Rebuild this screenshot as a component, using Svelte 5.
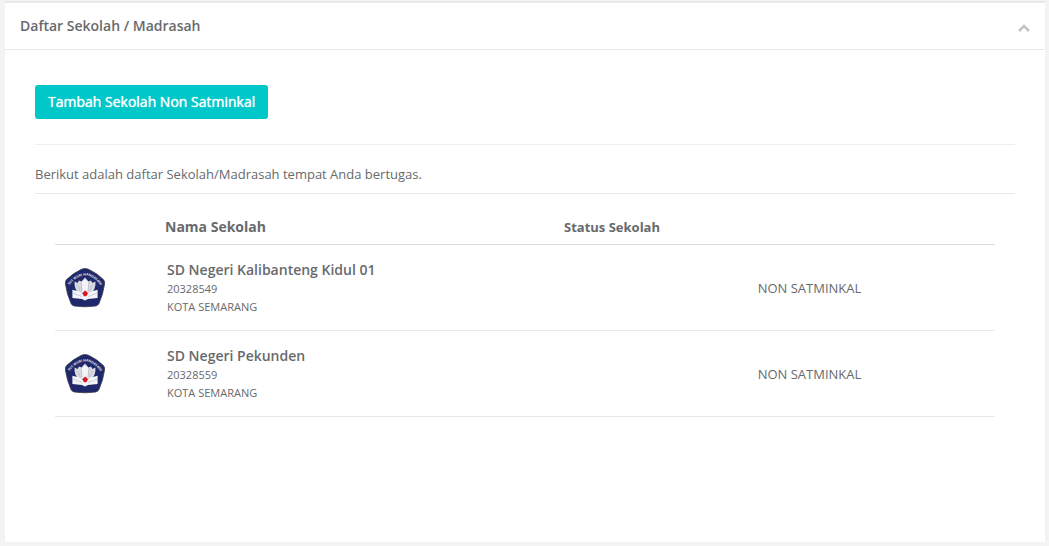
<script>
  let collapsed = $state(false);

  const schools = [
    { name: 'SD Negeri Kalibanteng Kidul 01', npsn: '20328549', city: 'KOTA SEMARANG', status: 'NON SATMINKAL' },
    { name: 'SD Negeri Pekunden', npsn: '20328559', city: 'KOTA SEMARANG', status: 'NON SATMINKAL' }
  ];
</script>

{#snippet logo(id)}
  <svg class="logo" viewBox="0 0 40 40" role="img" aria-label="Tut Wuri Handayani">
    <path
      d="M20 0.6 Q22 0.6 24 1.5 Q32 5.2 38.4 11.6 Q40 13.4 39.6 15.8 Q38.2 26 34 35.4 Q33 37.6 30.6 38 Q20 39.6 9.4 38 Q7 37.6 6 35.4 Q1.8 26 0.4 15.8 Q0 13.4 1.6 11.6 Q8 5.2 16 1.5 Q18 0.6 20 0.6Z"
      fill="#20286c"
      stroke="#38384c"
      stroke-width="0.8"
    />
    <path {id} d="M3 19.5 Q11 7.4 20 7.4 Q29 7.4 37 19.5" fill="none" />
    <text font-size="3.4" font-weight="700" fill="#e2e3e8" text-anchor="middle">
      <textPath href="#{id}" startOffset="50%">TUT WURI HANDAYANI</textPath>
    </text>
    <path d="M9.6 13.6 L12.5 15 L14 12.4 L16.5 13.4 L20 9.4 L23.5 13.4 L26 12.4 L27.5 15 L30.4 13.6 Q31 20 27 25 L13 25 Q9 20 9.6 13.6Z" fill="#d9dae1" />
    <path d="M16.8 14 Q20 10 23.2 14 L22.6 24 L17.4 24Z" fill="#f4f4f6" />
    <path d="M12.5 17 L15.5 23 M16 14.5 L17 23 M24 14.5 L23 23 M27.5 17 L24.5 23" stroke="#a6a9bc" stroke-width="0.5" />
    <path d="M7.4 21.8 L14 23.5 L20 27 L26 23.5 L32.6 21.8 L32.6 30 L23 31 L20 32.6 L17 31 L7.4 30Z" fill="#f4f4f6" />
    <path d="M8 25.2 L17 28.5 M32 25.2 L23 28.5" stroke="#b6b9c8" stroke-width="0.6" />
    <path d="M20.2 22.6 Q22.8 23.8 22.6 26 Q22 28.4 20.2 28.4 Q18.2 28.2 17.8 26 Q17.8 23.8 20.2 22.6Z" fill="#e01522" />
  </svg>
{/snippet}

<section class="panel">
  <header class="panel-heading">
    <h1>Daftar Sekolah / Madrasah</h1>
    <button class="toggle" type="button" aria-label="Tutup panel" aria-expanded={!collapsed} onclick={() => (collapsed = !collapsed)}>
      <svg class:flipped={collapsed} viewBox="0 0 12 8" width="12" height="8">
        <path d="M1 7 L6 2 L11 7" fill="none" stroke="#c4c4c4" stroke-width="2.6" />
      </svg>
    </button>
  </header>

  {#if !collapsed}
    <div class="panel-body">
      <button class="btn" type="button">Tambah Sekolah Non Satminkal</button>
      <hr />
      <p>Berikut adalah daftar Sekolah/Madrasah tempat Anda bertugas.</p>

      <div class="list">
        <table>
          <thead>
            <tr>
              <th class="col-logo"></th>
              <th class="col-name">Nama Sekolah</th>
              <th class="col-status">Status Sekolah</th>
            </tr>
          </thead>
          <tbody>
            {#each schools as school, i}
              <tr>
                <td>{@render logo(`motto-${i}`)}</td>
                <td>
                  <div class="name">{school.name}</div>
                  <div class="detail">{school.npsn}</div>
                  <div class="detail">{school.city}</div>
                </td>
                <td class="status">{school.status}</td>
              </tr>
            {/each}
          </tbody>
        </table>
      </div>
    </div>
  {/if}
</section>

<style>
  :global(body) {
    background: #f3f3f3;
  }

  :global(#app) {
    box-sizing: border-box;
    min-height: 100vh;
    padding: 1px 4px 4px 5px;
    display: flex;
    flex-direction: column;
  }

  .panel {
    flex: 1;
    background: #fff;
    border-top: 2px solid #e7eaec;
    color: #676a6c;
    font-family: 'Open Sans', 'Liberation Sans', sans-serif;
    font-size: 13px;
    line-height: 18px;
  }

  .panel-heading {
    display: flex;
    justify-content: space-between;
    align-items: center;
    min-height: 46px;
    padding: 0 15px;
    border-bottom: 1px solid #e7eaec;
  }

  h1 {
    margin: 0;
    font-size: 14px;
    font-weight: 600;
  }

  .toggle {
    display: flex;
    padding: 4px 0 0;
    border: none;
    background: none;
    cursor: pointer;
  }

  .flipped {
    transform: rotate(180deg);
  }

  .panel-body {
    padding: 35px 30px 30px;
  }

  .btn {
    display: block;
    height: 34px;
    padding: 0 13px 2px;
    border: none;
    border-radius: 3px;
    background: #00c7c9;
    color: #fff;
    font: 400 14px 'Open Sans', 'Liberation Sans', sans-serif;
    text-shadow: 0 0 1px #fff;
    cursor: pointer;
  }

  hr {
    margin: 25px 0 20px;
    border: none;
    border-top: 1px solid #eee;
  }

  p {
    margin: 0;
    padding-bottom: 10px;
    border-bottom: 1px solid #e7eaec;
  }

  .list {
    padding: 15px 20px;
  }

  table {
    width: 100%;
    border-collapse: separate;
    border-spacing: 0;
    table-layout: fixed;
  }

  th {
    height: 35px;
    padding: 0 8px;
    border-bottom: 1px solid #ddd;
    text-align: left;
    font-weight: 700;
  }

  .col-logo {
    width: 86px;
  }

  .col-name {
    font-size: 14px;
  }

  .col-status {
    width: 45%;
  }

  td {
    padding: 15px 10px 14px;
    border-bottom: 1px solid #e7eaec;
    vertical-align: middle;
  }

  .logo {
    display: block;
    width: 40px;
    height: 40px;
  }

  .name {
    font-size: 14px;
    font-weight: 600;
    line-height: 20px;
  }

  .detail {
    font-size: 11px;
  }

  .status {
    padding-left: 78px;
    text-align: center;
  }
</style>
